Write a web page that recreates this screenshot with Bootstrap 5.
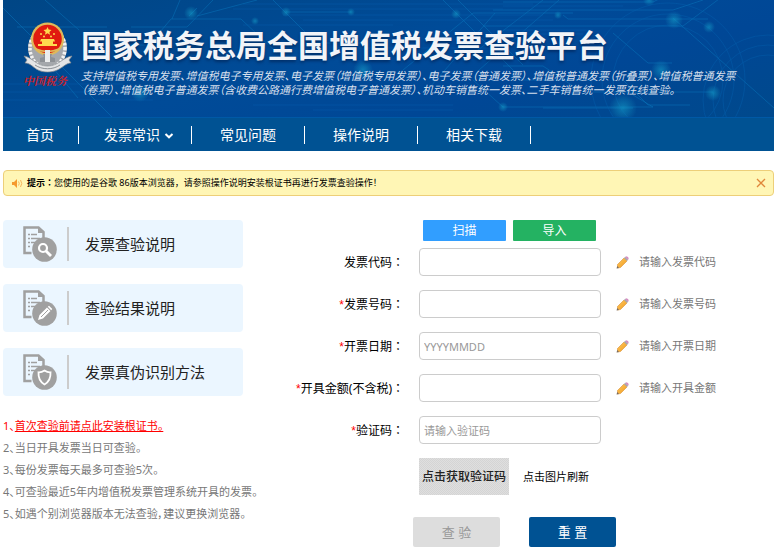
<!DOCTYPE html>
<html lang="zh-CN">
<head>
<meta charset="utf-8">
<meta name="viewport" content="width=device-width, initial-scale=1">
<title>国家税务总局全国增值税发票查验平台</title>
<link rel="stylesheet" href="https://cdn.jsdelivr.net/npm/bootstrap@5.3.0/dist/css/bootstrap.min.css">
<style>
body{font-family:"Noto Sans","Noto Sans CJK SC",sans-serif;font-size:11px;line-height:16px;color:#000;background:#fff}
.page{padding:0 4px 11px 3px}
.banner{position:relative;overflow:hidden;height:117px;background:linear-gradient(165deg,#004685 0%,#004b98 45%,#004796 70%,#00498c 100%)}
.circuit{position:absolute;inset:0;width:100%;height:100%}
.banner-body{position:relative;padding:22px 0 0 20px}
.emblem{width:50px;flex:none}
.motto{color:#c9212c;font-family:"Liberation Serif","Noto Serif CJK SC","Noto Sans CJK SC",serif;font-size:11px;line-height:16px;font-weight:700;font-style:italic;white-space:nowrap}
.banner h1{font-size:31px;line-height:40px;font-weight:700;margin:3px 0 0;white-space:nowrap;color:#f2f4f8;text-shadow:0 2px 3px rgba(0,20,60,.5)}
.banner p{font-family:"Noto Sans CJK SC",sans-serif;font-feature-settings:"palt";font-size:11px;line-height:14px;font-style:italic;color:#d5dfec;margin:3px 0 0;white-space:nowrap}
.mainnav{background:#005293;border-top:1px solid #0059a6;min-height:34px}
.mainnav .nav-link{color:#fff;font-size:14px;line-height:18px;padding:0 28px;border-right:1px solid #fff}
.mainnav .nav-item:first-child .nav-link{padding:0 24px 0 23px}
.mainnav .drop{padding:0 17px 0 25px}
.tip{margin-top:19px;border:1px solid #edcf79;border-radius:4px;background:#fff6b5;font-size:9px;line-height:14px;padding:5px 7px 5px 8px;min-height:26px}
.tip button{border:0;background:none;padding:0;line-height:0}
.side{flex:0 0 240px;min-width:0}
.tile{display:flex;align-items:center;height:48px;border-radius:4px;background:#ebf6ff;color:#222;font-size:15px;text-decoration:none;padding-left:20px;margin-bottom:16px}
.tile svg{margin-right:10px}
.tile span{border-left:2px solid #ccc;line-height:34px;padding-left:16px}
.notes{list-style:none;padding:0;margin:19px 0 0;line-height:22px;color:#777;white-space:nowrap;font-feature-settings:"palt"}
.notes .hot,.notes a{color:#f00}
.checkform{flex:1 1 0;min-width:0}
.field{display:flex;align-items:center;margin-bottom:14px}
.field label{flex:0 0 161px;text-align:right;font-size:12px;margin-right:15px}
.field label i{color:#f00;font-style:normal;font-family:"Liberation Sans",sans-serif}
.colon{font-family:"Noto Sans CJK TC",sans-serif}
.field .form-control{width:182px;flex:none;height:28px;border:1px solid #ccc;border-radius:4px;padding:0 4px;font-size:11px;line-height:16px}
.field .form-control::placeholder{color:#999}
.field svg{margin:0 10px 0 15px;flex:none}
.hint{color:#777;white-space:nowrap}
.tools{padding-left:180px;gap:7px;margin-bottom:7px}
.tools .btn{width:83px;height:21px;padding:0;border:0;border-radius:1px;font-size:12px;line-height:21px;color:#fff}
.scan,.scan:hover{background:#319eff}.import,.import:hover{background:#24b262}
.captcha{padding-left:176px;gap:14px}
.captcha button{width:90px;height:37px;border:0;padding:0;font-size:12px;font-weight:500;color:#222;background:repeating-conic-gradient(#d4d4d4 0 25%,#dfdfdf 0 50%) 0 0/2px 2px}
.actions{padding-left:170px;gap:29px;margin-top:22px}
.actions .btn{width:87px;height:30px;padding:0;border:0;border-radius:2px;font-size:13px;line-height:30px}
.actions .query,.actions .query:disabled{background:#ddd;color:#999;opacity:1}
.actions .reset{background:#005293;color:#fff}
</style>
<script src="https://cdn.jsdelivr.net/npm/bootstrap@5.3.0/dist/js/bootstrap.bundle.min.js"></script>
</head>
<body>
<svg width="0" height="0" class="position-absolute" aria-hidden="true">
<defs>
<linearGradient id="wood" x1="0" y1="0" x2="1" y2="1"><stop offset="0" stop-color="#ffc95c"/><stop offset="1" stop-color="#f09a20"/></linearGradient>
<symbol id="pencil" viewBox="0 0 13 13"><path d="M1.500 8.500 8 2l3 3-6.500 6.500-3 .5z" fill="url(#wood)" stroke="#d99038" stroke-width=".6"/><path d="m1.200 10-.6 2.600L3 12z" fill="#776b60"/><path d="m8 2 1.200-1.200 3 3L11 5z" fill="#a5a5ac"/><path d="m9.200.900 1-.7q2.600.3 2.500 2.600l-.6 1z" fill="#d58cc0"/></symbol>
<symbol id="sheet" viewBox="0 0 34 36"><path d="M8.500 27H1.500V1.500h14l5 4.500v6" fill="none" stroke="#a0a0a0" stroke-width="2.500"/><path d="M15 1v6h6" fill="#a0a0a0"/><path d="M5 8.500h2m1 0h6M5 12.500h2m1 0h9M5 16.500h2m1 0h5M5 20.500h2" stroke="#a0a0a0" stroke-width="1.500"/><circle cx="21.500" cy="23.500" r="12.300" fill="#a0a0a0"/></symbol>
</defs>
</svg>
<div class="page">
<header class="banner">
<svg class="circuit" viewBox="0 0 771 117" preserveAspectRatio="xMidYMid slice" aria-hidden="true">
<defs><radialGradient id="glow"><stop offset="0" stop-color="#16a3cc" stop-opacity=".55"/><stop offset="1" stop-color="#16a3cc" stop-opacity="0"/></radialGradient></defs>
<g fill="none" stroke="#0876bc" stroke-opacity=".5">
<path d="M0 8 60 68l60 60M14 27h90M42 0l34 30M112 45h34l22-26h70l36 34M128 27h56l26-27M177 0l-8 19M186 16l8-8M194 16l60-16M75 98l-25-30M270 0l43 43M283 12h65M310 43h50M400 70l70-57h100M420 95l72-82M440 0l80 80h70M455 0l65 65M500 2h150l8-4M490 10h180l30-10M480 26h200l40-30M540 0l-65 50M556 0l-80 70M560 15l5 4h140M610 33l35 30h24M670 18l101 90M500 66h40l30 20M590 92h120M540 108h90M470 80l30 27h150l-20-12M620 80l25 25h42"/>
</g>
<g fill="none" stroke="#0560ad" stroke-opacity=".45"><path d="M240 4h290M230 9h270M280 15h260M300 20h250M240 25h150M330 48h160M0 84h120M0 92h110M0 100h150M250 105h200M310 110h140M500 6h120M500 30h90M510 34h70"/><circle cx="665" cy="80" r="55"/><circle cx="665" cy="80" r="66"/><circle cx="665" cy="80" r="77"/><circle cx="765" cy="100" r="45"/><circle cx="765" cy="100" r="55"/><circle cx="765" cy="100" r="65"/></g>
<g fill="url(#glow)"><circle cx="188" cy="13" r="7"/><circle cx="137" cy="93" r="9"/><circle cx="252" cy="21" r="4"/><circle cx="283" cy="12" r="5"/><circle cx="348" cy="12" r="4"/><circle cx="453" cy="14" r="5"/><circle cx="671" cy="20" r="9"/><circle cx="706" cy="27" r="6"/><circle cx="710" cy="93" r="8"/><circle cx="646" cy="0" r="6"/><circle cx="360" cy="70" r="10"/><circle cx="658" cy="70" r="10"/><circle cx="620" cy="108" r="14"/><circle cx="500" cy="107" r="5"/><circle cx="555" cy="15" r="4"/></g>
</svg>
<div class="banner-body d-flex">
<div class="emblem">
<svg width="50" height="51" viewBox="0 0 50 51" class="d-block" role="img" aria-label="税徽">
<ellipse cx="24.500" cy="26" rx="19.500" ry="21" fill="#a5a8ac"/>
<ellipse cx="24.500" cy="26" rx="17.500" ry="20" fill="none" stroke="#f2f2f2" stroke-width="3.500" stroke-dasharray="2.500 1.500"/>
<circle cx="24.500" cy="17" r="16.500" fill="#dfb95a"/><circle cx="24.500" cy="17" r="14.300" fill="#e11a10"/>
<path d="m24.500 5 1.200 2.600 2.800.3-2.100 2 .6 2.800-2.500-1.400-2.500 1.400.6-2.800-2.100-2 2.800-.3z" fill="#ffd94e"/>
<g fill="#ffd94e"><circle cx="18" cy="12" r="1"/><circle cx="21" cy="14.500" r="1"/><circle cx="28" cy="14.500" r="1"/><circle cx="31" cy="12" r="1"/><path d="M18 17h13l1 2.500h-2V22h4v2H15v-2h4v-2.500h-2z"/></g>
<path d="M13 27q11.500 5 23 0" fill="none" stroke="#dfb95a" stroke-width="1.500"/>
<path d="M20 32h9l-1 3 4 1v4H17v-4l4-1z" fill="#8d9196"/><path d="M22 28h5v12h-5z" fill="#eceded"/>
<path d="M1 34c8 1 12 10 23.500 10S40 35 49 34l-3 4 2 3c-7 0-10 9-23.500 9S10 41 2 41l2-3z" fill="#e4e5e6" stroke="#85898e" stroke-width=".7"/>
<path d="M12 43c7 5 18 5 25 0" fill="none" stroke="#8c9095"/>
</svg>
<div class="motto">中国税务</div>
</div>
<div class="ms-2">
<h1>国家税务总局全国增值税发票查验平台</h1>
<p>支持增值税专用发票、增值税电子专用发票、电子发票（增值税专用发票）、电子发票（普通发票）、增值税普通发票（折叠票）、增值税普通发票<br>（卷票）、增值税电子普通发票（含收费公路通行费增值税电子普通发票）、机动车销售统一发票、二手车销售统一发票在线查验。</p>
</div>
</div>
</header>
<nav class="mainnav d-flex align-items-center">
<ul class="nav flex-nowrap">
<li class="nav-item"><a class="nav-link" href="#">首页</a></li>
<li class="nav-item"><a class="nav-link drop" href="#">发票常识<svg class="ms-1" width="10" height="6" viewBox="0 0 10 6" aria-hidden="true"><path d="m1.500 1 3.500 3.300L8.500 1" fill="none" stroke="#fff" stroke-width="2"/></svg></a></li>
<li class="nav-item"><a class="nav-link" href="#">常见问题</a></li>
<li class="nav-item"><a class="nav-link" href="#">操作说明</a></li>
<li class="nav-item"><a class="nav-link" href="#">相关下载</a></li>
</ul>
</nav>
<div class="tip d-flex align-items-center" role="alert">
<svg class="me-1" width="11" height="9" viewBox="0 0 11 9" aria-hidden="true"><path d="M0 3h2l3-3v9L2 6H0z" fill="#f59a2d"/><path d="M6.500 2.500q1.500 2 0 4M8.500 1q2.500 3.500 0 7" fill="none" stroke="#f8b65c"/></svg>
<div class="flex-grow-1"><b>提示<span class="colon" lang="zh-TW">：</span></b>您使用的是谷歌 86版本浏览器，请参照操作说明安装根证书再进行发票查验操作！</div>
<button type="button" aria-label="关闭"><svg width="10" height="10" viewBox="0 0 10 10"><path d="m1 1 8 8M9 1 1 9" stroke="#e0873a" stroke-width="1.300"/></svg></button>
</div>
<main class="d-flex mt-4">
<aside class="side">
<a class="tile" href="#"><svg width="34" height="36" viewBox="0 0 34 36" aria-hidden="true"><use href="#sheet"/><circle cx="20" cy="22" r="4" fill="none" stroke="#fff" stroke-width="2.200"/><path d="m23 25 5 5" stroke="#fff" stroke-width="2.800"/></svg><span>发票查验说明</span></a>
<a class="tile" href="#"><svg width="34" height="36" viewBox="0 0 34 36" aria-hidden="true"><use href="#sheet"/><path d="m15 30 1.500-5 7.500-7.500 3.500 3.500L20 28.500zM24.800 16.800l1.200-1 3.300 3.200-1.100 1.200z" fill="#fff"/><path d="m18 27 7-7" stroke="#a0a0a0"/></svg><span>查验结果说明</span></a>
<a class="tile" href="#"><svg width="34" height="36" viewBox="0 0 34 36" aria-hidden="true"><use href="#sheet"/><path d="M21.500 16.500q3 2 6 1.800.5 8.500-6 12.200-6.500-3.700-6-12.200 3 .2 6-1.800z" fill="none" stroke="#fff" stroke-width="1.800"/></svg><span>发票真伪识别方法</span></a>
<ul class="notes">
<li class="hot">1、<a href="#">首次查验前请点此安装根证书。</a></li>
<li>2、当日开具发票当日可查验。</li>
<li>3、每份发票每天最多可查验5次。</li>
<li>4、可查验最近5年内增值税发票管理系统开具的发票。</li>
<li>5、如遇个别浏览器版本无法查验，建议更换浏览器。</li>
</ul>
</aside>
<form class="checkform">
<div class="tools d-flex"><button type="button" class="btn scan">扫描</button><button type="button" class="btn import">导入</button></div>
<div class="field"><label for="code">发票代码<span class="colon" lang="zh-TW">：</span></label><input class="form-control" id="code" type="text"><svg width="13" height="13" aria-hidden="true"><use href="#pencil"/></svg><span class="hint">请输入发票代码</span></div>
<div class="field"><label for="number"><i>*</i>发票号码<span class="colon" lang="zh-TW">：</span></label><input class="form-control" id="number" type="text"><svg width="13" height="13" aria-hidden="true"><use href="#pencil"/></svg><span class="hint">请输入发票号码</span></div>
<div class="field"><label for="date"><i>*</i>开票日期<span class="colon" lang="zh-TW">：</span></label><input class="form-control" id="date" type="text" placeholder="YYYYMMDD"><svg width="13" height="13" aria-hidden="true"><use href="#pencil"/></svg><span class="hint">请输入开票日期</span></div>
<div class="field"><label for="amount"><i>*</i>开具金额(不含税)<span class="colon" lang="zh-TW">：</span></label><input class="form-control" id="amount" type="text"><svg width="13" height="13" aria-hidden="true"><use href="#pencil"/></svg><span class="hint">请输入开具金额</span></div>
<div class="field"><label for="verify"><i>*</i>验证码<span class="colon" lang="zh-TW">：</span></label><input class="form-control" id="verify" type="text" placeholder="请输入验证码"></div>
<div class="captcha d-flex align-items-center"><button type="button">点击获取验证码</button><span>点击图片刷新</span></div>
<div class="actions d-flex"><button type="button" class="btn query" disabled>查 验</button><button type="reset" class="btn reset">重 置</button></div>
</form>
</main>
</div>
</body>
</html>
